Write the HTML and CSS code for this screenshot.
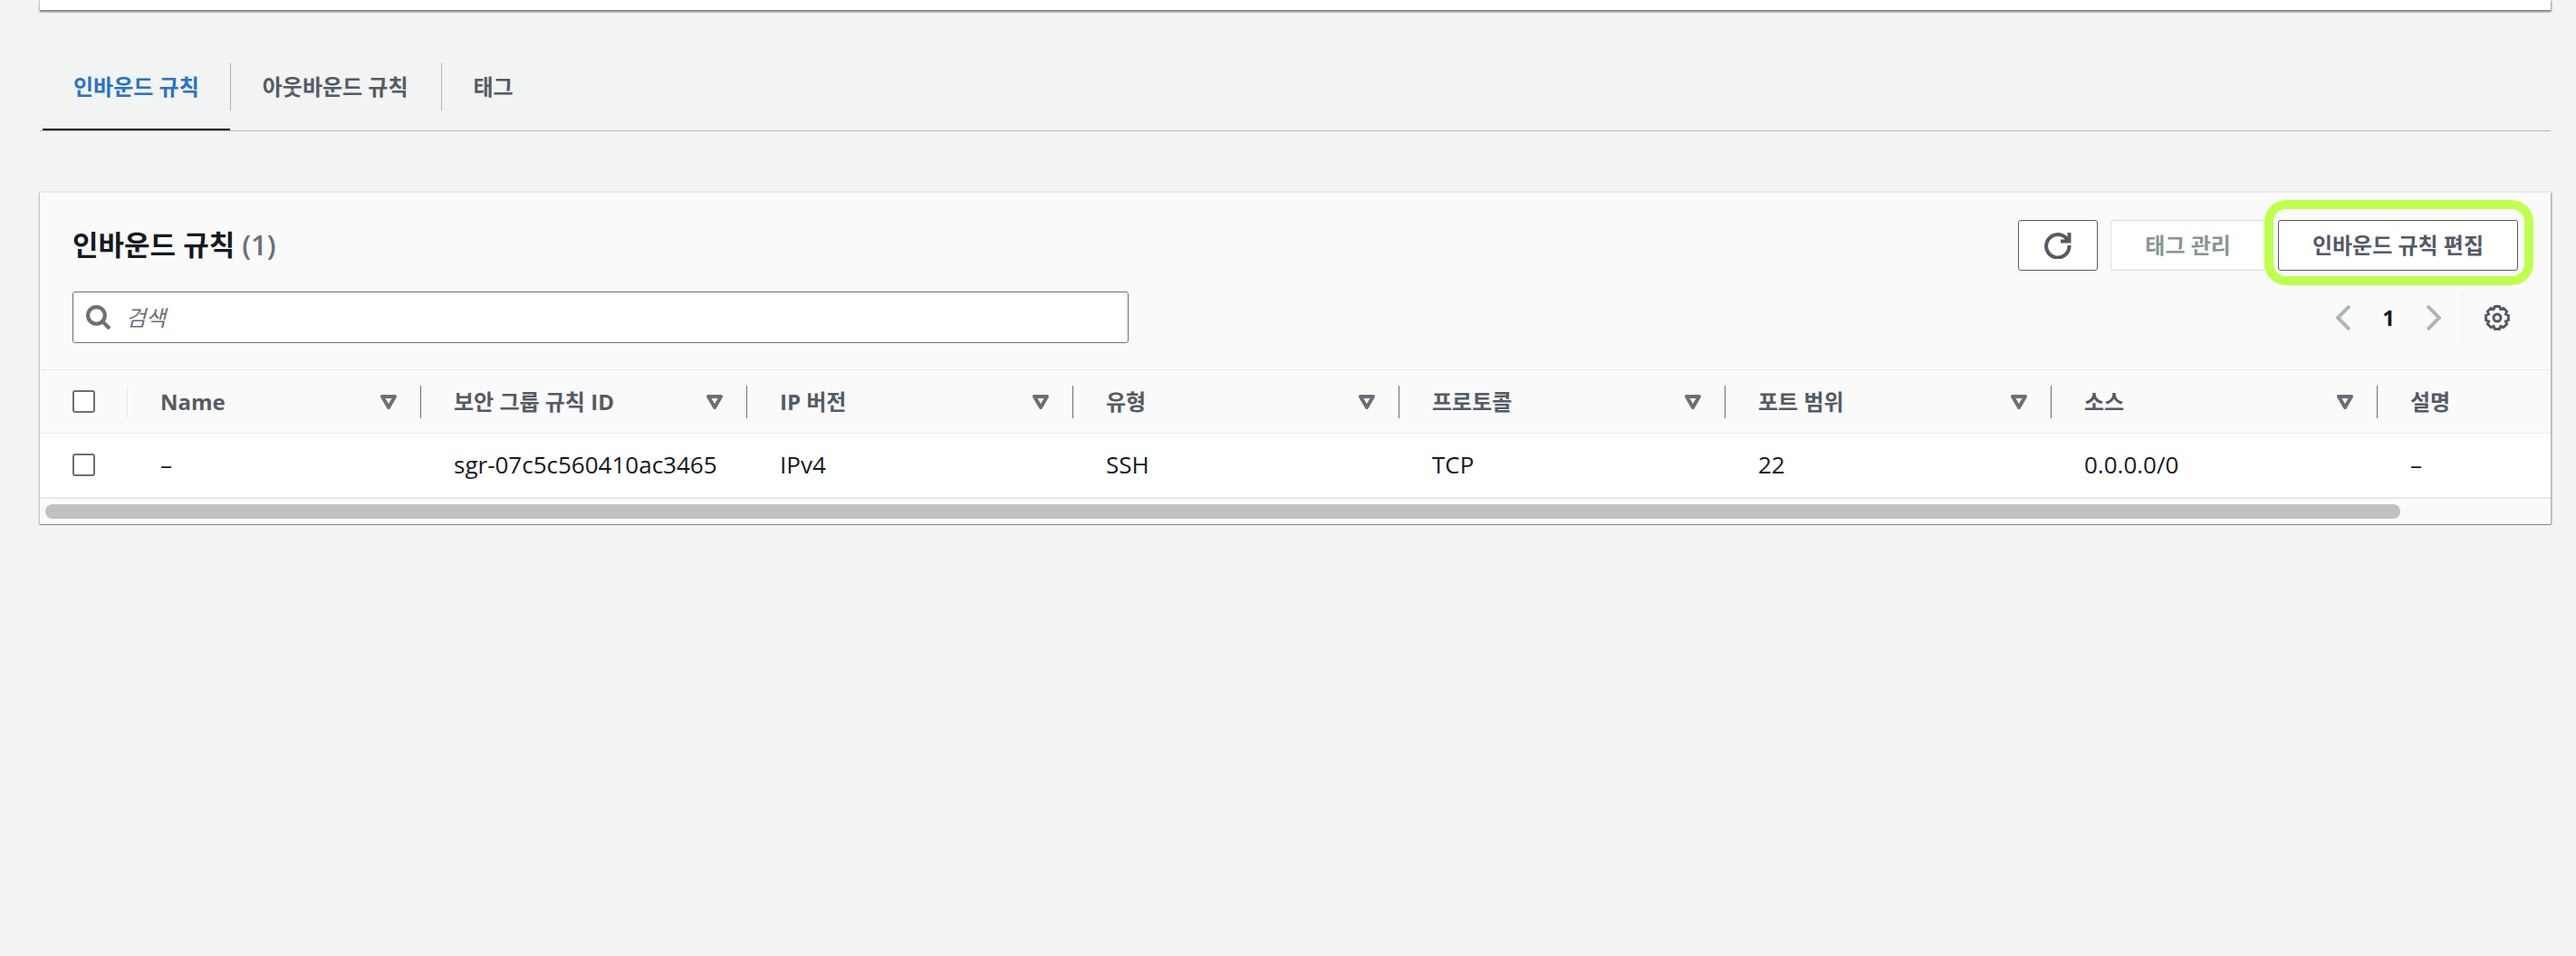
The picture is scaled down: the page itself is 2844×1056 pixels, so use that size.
FILE: index.html
```html
<!DOCTYPE html>
<html lang="ko">
<head>
    <meta charset="UTF-8">
    <meta name="viewport" content="width=device-width, initial-scale=1.0">
    <title>인바운드 규칙</title>
    <link rel="stylesheet" href="styles.css">
</head>
<body>
    <section class="details-panel"></section>

    <nav class="tabs">
        <a href="#inbound" class="tab active">인바운드 규칙</a>
        <a href="#outbound" class="tab">아웃바운드 규칙</a>
        <a href="#tags" class="tab">태그</a>
    </nav>

    <main class="panel" id="inbound">
        <header class="panel-header">
            <div class="header-row">
                <h2>인바운드 규칙 <span class="count">(1)</span></h2>
                <div class="actions">
                    <button type="button" class="btn btn-icon" aria-label="새로 고침">
                        <svg class="icon" viewBox="0 0 30 30"><path d="M27.500 15A12.700 12.700 0 1 1 24 7L27 10"/><path d="M27.500 1V10.500H18"/></svg>
                    </button>
                    <button type="button" class="btn" disabled>태그 관리</button>
                    <div class="highlight">
                        <button type="button" class="btn">인바운드 규칙 편집</button>
                    </div>
                </div>
            </div>
            <div class="header-row">
                <label class="search">
                    <svg class="search-icon" viewBox="0 0 26 26"><circle cx="11" cy="11" r="9"/><path d="M17 17L25 25"/></svg>
                    <input type="search" placeholder="검색" aria-label="검색">
                </label>
                <div class="tools">
                    <div class="pagination">
                        <button type="button" class="page-arrow" aria-label="이전" disabled>
                            <svg viewBox="0 0 16 28"><path d="M15 1L2 14L15 27"/></svg>
                        </button>
                        <button type="button" class="page">1</button>
                        <button type="button" class="page-arrow" aria-label="다음" disabled>
                            <svg viewBox="0 0 16 28"><path d="M1 1L14 14L1 27"/></svg>
                        </button>
                    </div>
                    <button type="button" class="settings" aria-label="설정">
                        <svg class="icon" viewBox="0 0 30 30"><path d="M27.400 12.500V17.500L24.400 18.900L25.600 22L22 25.600L18.900 24.400L17.500 27.400H12.500L11.100 24.400L8 25.600L4.400 22L5.600 18.900L2.600 17.500V12.500L5.600 11.100L4.400 8L8 4.400L11.100 5.600L12.500 2.600H17.500L18.900 5.600L22 4.400L25.600 8L24.400 11.100Z"/><circle cx="15" cy="15" r="4"/></svg>
                    </button>
                </div>
            </div>
        </header>

        <div class="table-wrap">
            <table>
                <thead>
                    <tr>
                        <th class="check"><input type="checkbox" aria-label="모두 선택"></th>
                        <th class="name"><div class="th-inner">Name <svg class="sort" viewBox="0 0 18 16"><path d="M2 2H16L9 14Z"/></svg></div></th>
                        <th><div class="th-inner">보안 그룹 규칙 ID <svg class="sort" viewBox="0 0 18 16"><path d="M2 2H16L9 14Z"/></svg></div></th>
                        <th><div class="th-inner">IP 버전 <svg class="sort" viewBox="0 0 18 16"><path d="M2 2H16L9 14Z"/></svg></div></th>
                        <th><div class="th-inner">유형 <svg class="sort" viewBox="0 0 18 16"><path d="M2 2H16L9 14Z"/></svg></div></th>
                        <th><div class="th-inner">프로토콜 <svg class="sort" viewBox="0 0 18 16"><path d="M2 2H16L9 14Z"/></svg></div></th>
                        <th><div class="th-inner">포트 범위 <svg class="sort" viewBox="0 0 18 16"><path d="M2 2H16L9 14Z"/></svg></div></th>
                        <th><div class="th-inner">소스 <svg class="sort" viewBox="0 0 18 16"><path d="M2 2H16L9 14Z"/></svg></div></th>
                        <th><div class="th-inner">설명</div></th>
                    </tr>
                </thead>
                <tbody>
                    <tr>
                        <td class="check"><input type="checkbox" aria-label="규칙 선택"></td>
                        <td>–</td>
                        <td>sgr-07c5c560410ac3465</td>
                        <td>IPv4</td>
                        <td>SSH</td>
                        <td>TCP</td>
                        <td>22</td>
                        <td>0.0.0.0/0</td>
                        <td>–</td>
                    </tr>
                </tbody>
            </table>
        </div>
        <div class="scrollbar">
            <div class="thumb"></div>
        </div>
    </main>
</body>
</html>
```

FILE: styles.css
```css
* {
    margin: 0;
    padding: 0;
    box-sizing: border-box;
}

body {
    padding: 0 28px 0 44px;
    background-color: #f2f3f3;
    color: #16191f;
    font-family: 'Open Sans', 'Noto Sans CJK KR', sans-serif;
    font-size: 24px;
    line-height: 36px;
}

button,
input {
    font: inherit;
    color: inherit;
}

svg {
    display: block;
    fill: none;
    stroke: currentColor;
}

.details-panel,
.panel {
    border-bottom: 1px solid #7d898b;
    box-shadow: 0 1px 1px #95a1a3, 1px 1px 2px rgba(0, 28, 36, 0.4), -1px 1px 2px rgba(0, 28, 36, 0.2);
}

.details-panel {
    height: 12px;
    background-color: #fff;
}

/* Tabs */
.tabs {
    display: flex;
    height: 133px;
    padding: 57px 0 0 3px;
    border-bottom: 1px solid #aab7b8;
}

.tab {
    display: flex;
    align-items: flex-start;
    padding-right: 36px;
    color: #545b64;
    font-weight: bold;
    line-height: 53px;
    text-decoration: none;
}

.tab::before {
    content: "";
    width: 1px;
    height: 53px;
    margin-right: 35px;
    background-color: #aab7b8;
}

.tab.active {
    padding: 0 34px;
    border-bottom: 2px solid #16191f;
    color: #2a73c0;
}

.tab.active::before {
    display: none;
}

/* Rules panel */
.panel {
    margin-top: 67px;
    border-top: 1px solid #eaeded;
    background-color: #fafafa;
}

.panel-header {
    display: flex;
    flex-direction: column;
    gap: 23px;
    padding: 30px 36px 29px;
}

.header-row {
    display: flex;
    justify-content: space-between;
    align-items: center;
}

h2 {
    padding-bottom: 2px;
    font-size: 31px;
    line-height: 40px;
}

.count {
    color: #687078;
    font-weight: 600;
}

.actions {
    display: flex;
    gap: 14px;
}

.btn {
    height: 56px;
    padding: 0 37px;
    border: 1px solid #545b64;
    border-radius: 3px;
    background-color: #fff;
    color: #545b64;
    font-weight: bold;
    white-space: nowrap;
    cursor: pointer;
}

.btn:disabled {
    border-color: #d5dbdb;
    color: #879596;
    cursor: default;
}

.btn-icon {
    padding: 0 28px;
}

.icon {
    width: 30px;
    height: 30px;
    stroke-width: 4;
}

.settings .icon {
    stroke-width: 3;
}

.highlight {
    position: relative;
}

/* Marker frame lying over the button */
.highlight::after {
    content: "";
    position: absolute;
    inset: -22px -17px -16px -15px;
    border: 10px solid #bfff4f;
    border-radius: 24px;
    pointer-events: none;
}

.search {
    display: flex;
    flex: 0 1 1166px;
    align-items: center;
    gap: 17px;
    height: 57px;
    padding: 0 14px;
    border: 1px solid #687078;
    border-radius: 3px;
    background-color: #fff;
}

.search-icon {
    width: 27px;
    height: 27px;
    color: #687078;
    stroke-width: 4;
}

.search input {
    flex: 1;
    border: none;
    background: none;
    outline: none;
}

.search input::placeholder {
    color: #687078;
    font-style: italic;
}

.tools {
    display: flex;
    align-items: center;
}

.tools button {
    border: none;
    background: none;
}

.pagination {
    display: flex;
    align-items: center;
    padding-right: 23px;
}

.page-arrow {
    color: #aab7b8;
}

.page-arrow svg {
    width: 16px;
    height: 28px;
    stroke-width: 4;
}

.page {
    width: 84px;
    font-weight: bold;
}

.tools .settings {
    height: 57px;
    padding: 0 8px 0 23px;
    border-left: 1px solid #eaeded;
    color: #545b64;
}

/* Table */
.table-wrap {
    overflow: hidden;
}

table {
    width: 100%;
    min-width: 2940px;
    border-collapse: separate;
    border-spacing: 0;
    table-layout: fixed;
}

th,
td {
    text-align: left;
    white-space: nowrap;
}

th {
    width: 360px;
    height: 71px;
    border-top: 1px solid #eaeded;
    border-bottom: 1px solid #eaeded;
    color: #545b64;
}

.name {
    width: 324px;
}

th.check {
    width: 97px;
}

td {
    height: 72px;
    padding: 0 0 2px 36px;
    border-bottom: 2px solid #e8e8e8;
    background-color: #fff;
    font-size: 26px;
    font-weight: 500;
}

.th-inner {
    display: flex;
    justify-content: space-between;
    align-items: center;
    padding: 0 26px 0 36px;
    border-right: 1px solid #687078;
}

.check {
    padding-left: 36px;
}

th.check {
    background: linear-gradient(#eaeded, #eaeded) right center / 1px 36px no-repeat;
}

.check input {
    display: block;
    width: 25px;
    height: 25px;
    border: 2px solid #687078;
    border-radius: 3px;
    background-color: #fff;
    appearance: none;
}

.sort {
    width: 18px;
    height: 16px;
    color: #687078;
    stroke-width: 4;
    stroke-linejoin: round;
}

.scrollbar {
    height: 28px;
    padding: 6px 0 6px 6px;
}

.thumb {
    width: 94%;
    height: 16px;
    border-radius: 8px;
    background-color: #c1c1c1;
}
```
